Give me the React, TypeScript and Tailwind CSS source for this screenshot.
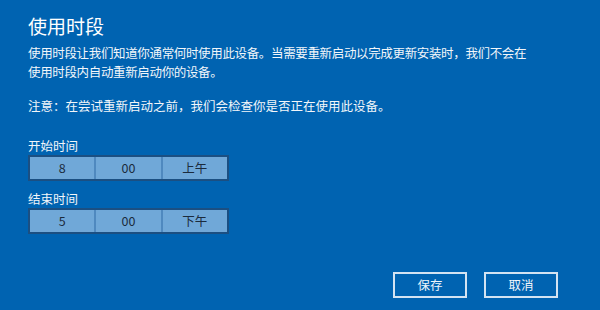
const font = "font-['Microsoft_YaHei','Noto_Sans_CJK_SC',sans-serif]"

function TimeBox({ h, m, ap }: { h: string; m: string; ap: string }) {
  const cells = [h, m, ap]
  return (
    <div className="flex w-[201px] h-[26px] border-2 border-[#1b4f82] bg-[#70a8d8]">
      {cells.map((c, i) => (
        <div
          key={i}
          className={`flex-1 flex items-center justify-center text-[12.5px] text-[#1b2b3c] ${
            i > 0 ? 'border-l-2 border-[#4f89bf]' : ''
          }`}
        >
          {c}
        </div>
      ))}
    </div>
  )
}

export default function App() {
  return (
    <div className={`w-[600px] h-[310px] bg-[#0063b1] text-white px-[28px] pt-[13px] flex flex-col ${font}`}>
      <h1 className="text-[19px] leading-[26px]">使用时段</h1>
      <p className="mt-[3.5px] text-[12.5px] leading-[19px] tracking-[-0.35px] text-[#f2f6fa]">
        使用时段让我们知道你通常何时使用此设备。当需要重新启动以完成更新安装时，我们不会在
        <br />
        使用时段内自动重新启动你的设备。
      </p>
      <p className="mt-[15px] text-[12.5px] leading-[19px] text-[#f2f6fa]">
        注意：在尝试重新启动之前，我们会检查你是否正在使用此设备。
      </p>
      <div className="mt-[21px] text-[12.5px] leading-[19px] text-[#f2f6fa]">开始时间</div>
      <div className="mt-[0.5px]">
        <TimeBox h="8" m="00" ap="上午" />
      </div>
      <div className="mt-[7.5px] text-[12.5px] leading-[19px] text-[#f2f6fa]">结束时间</div>
      <div className="mt-[0.5px]">
        <TimeBox h="5" m="00" ap="下午" />
      </div>
      <div className="mt-[38px] flex justify-end gap-[17px] pr-[14px]">
        <button className="w-[74px] h-[26px] border-2 border-[#d3e3f2] text-[12.5px] text-[#eef4fa]">保存</button>
        <button className="w-[74px] h-[26px] border-2 border-[#d3e3f2] text-[12.5px] text-[#eef4fa]">取消</button>
      </div>
    </div>
  )
}
